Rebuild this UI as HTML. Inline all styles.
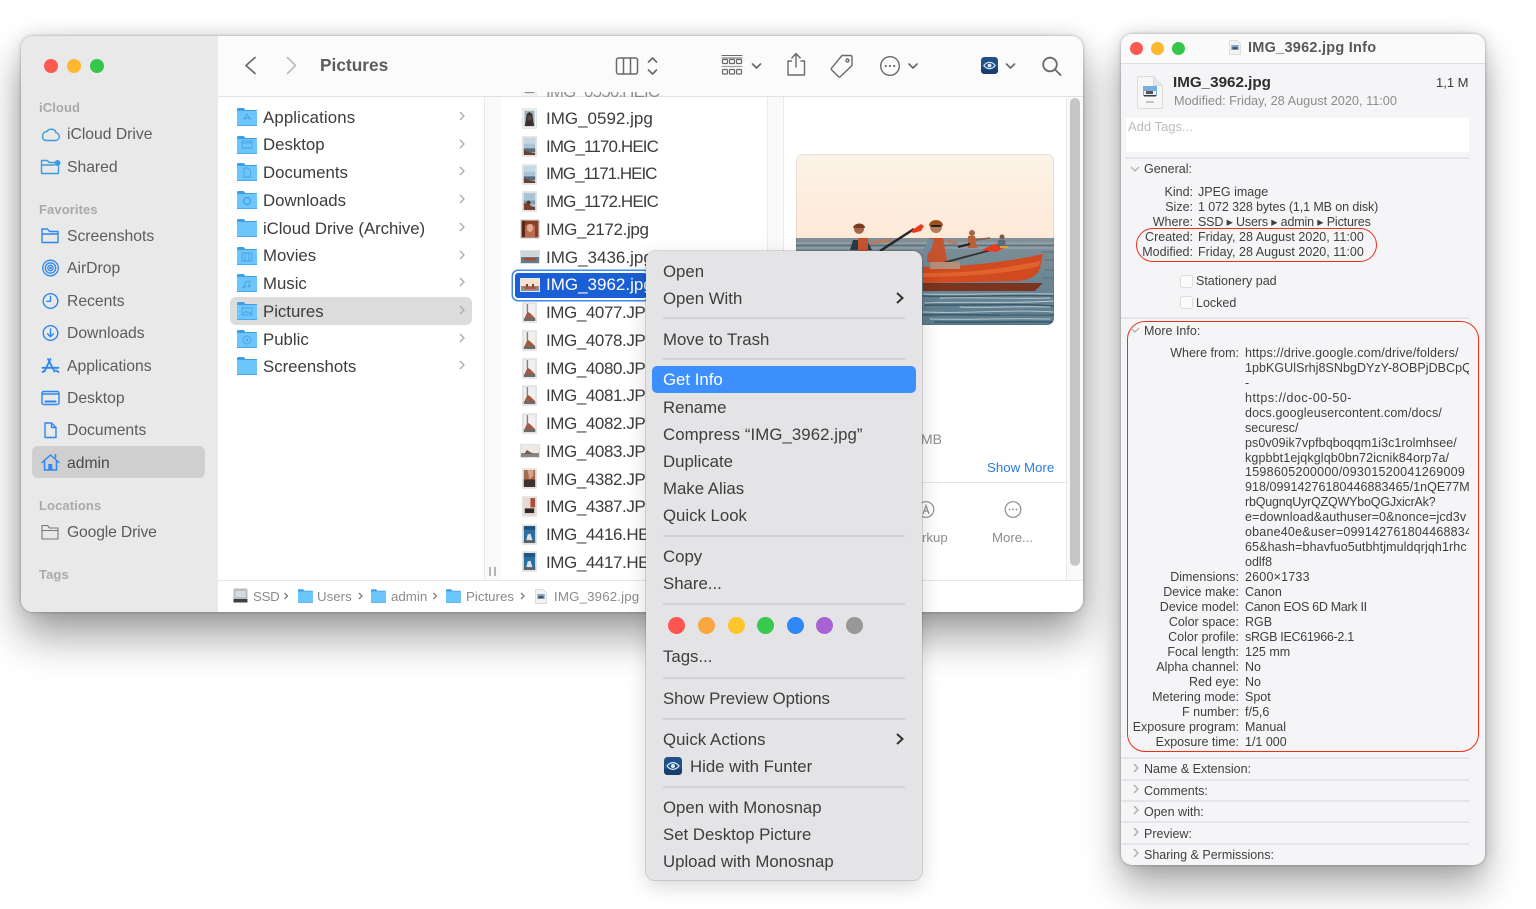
<!DOCTYPE html>
<html lang="en"><head><meta charset="utf-8"><title>Finder and Get Info</title>
<style>
html,body{margin:0;padding:0;background:#fff;width:1536px;height:909px;overflow:hidden;font-family:"Liberation Sans",sans-serif}
#stage{position:relative;width:1536px;height:909px;overflow:hidden;filter:blur(.3px)}
.a{position:absolute}
.t{position:absolute;white-space:nowrap;line-height:20px;height:20px}
svg.a{overflow:visible}
.th{filter:blur(.35px)}
#finder{position:absolute;left:21px;top:36px;width:1062px;height:576px;border-radius:12px;background:#fff;box-shadow:0 24px 42px rgba(0,0,0,.38),0 0 3px rgba(0,0,0,.3),0 0 22px rgba(0,0,0,.12)}
#side{left:21px;top:36px;width:197px;height:576px;background:#e9e9e9;border-radius:12px 0 0 12px}
#toolbar{left:218px;top:36px;width:865px;height:60px;background:#fbfbfb;border-radius:0 12px 0 0;border-bottom:1px solid #e2e2e2}
.sh{font-size:13px;font-weight:bold;color:#a9a9a9;letter-spacing:.1px}
.si{font-size:15.7px;color:#5c5c5c}
.c1{font-size:16.8px;color:#3c3c3c}
.f{font-size:17px;color:#3c3c3c}
.h{letter-spacing:-.88px}
.j{letter-spacing:-.42px}
.pb{font-size:13.3px;color:#8b8b8b}
#menu{position:absolute;left:646px;top:251px;width:276px;height:629px;background:#e4e4e6;border-radius:9px;box-shadow:0 0 0 1px rgba(0,0,0,.13),0 6px 20px rgba(0,0,0,.16)}
.m{font-size:16.8px;color:#3d3d3d;left:663px}
.ms{position:absolute;left:663px;width:242px;height:2px;background:#d2d2d4}
.dot{position:absolute;width:17px;height:17px;border-radius:50%;top:616.5px}
#info{position:absolute;left:1121px;top:34px;width:364px;height:831px;border-radius:11px;background:#f5f5f7;box-shadow:0 22px 38px rgba(0,0,0,.32),0 0 3px rgba(0,0,0,.3),0 0 20px rgba(0,0,0,.14)}
.i{font-size:12.5px;color:#3f3f3f}
.l{font-size:12.5px;color:#3f3f3f;text-align:right;left:1100px}
.l1{width:93px}
.l2{width:139px}
.v1{font-size:12.5px;color:#3f3f3f;left:1198px}
.v2{font-size:12.5px;color:#3f3f3f;left:1245px;max-width:224px;overflow:hidden}
.is{position:absolute;left:1121px;width:348px;height:2px;background:#e5e5e7}
.cb{position:absolute;left:1180px;width:11px;height:11px;background:#fbfbfb;border:1px solid #dedede;border-radius:3px}
</style></head><body><div id="stage">
<svg width="0" height="0" style="position:absolute">
<defs>
<symbol id="folder" viewBox="0 0 20 18"><path d="M0 3V1.2C0 .5.5 0 1.2 0h5c.6 0 1 .3 1.4 1L8.500 2H20v1z" fill="#3f9fe6"/><path d="M0 3h18.800c.7 0 1.200.5 1.200 1.200v12.600c0 .7-.5 1.200-1.200 1.200H1.200C.5 18 0 17.500 0 16.800z" fill="#6cc5fb"/><path d="M0 17h20v1H0z" fill="#49a9ea"/></symbol>
<symbol id="chev" viewBox="0 0 8 12"><path d="M2 2l4 4-4 4" fill="none" stroke="#aaa" stroke-width="1.300"/></symbol>
<symbol id="funter" viewBox="0 0 18 18"><rect width="18" height="18" rx="3.500" fill="#1f5188"/><path d="M0 12h18v2.500a3.500 3.500 0 0 1-3.500 3.500h-11A3.500 3.500 0 0 1 0 14.500z" fill="#173e6c"/><path d="M3 9c3.500-4.500 8.500-4.500 12 0-3.500 4.500-8.500 4.500-12 0z" fill="none" stroke="#dcecf8" stroke-width="1.200"/><circle cx="9" cy="9" r="2" fill="#dcecf8"/></symbol>
<symbol id="th-dark" viewBox="0 0 16 22"><rect width="16" height="22" fill="#e2e2e2"/><rect x="1.500" y="1.500" width="13" height="19" fill="#fff"/><rect x="2.500" y="2.500" width="11" height="17" fill="#9fb3bf"/><path d="M5 6l3-2 3 2 1 8 1 5H3l1-5z" fill="#3a2f2e"/><rect x="6" y="8" width="4" height="5" fill="#5a4a48"/></symbol>
<symbol id="th-sky" viewBox="0 0 16 22"><rect width="16" height="22" fill="#e2e2e2"/><rect x="2" y="2" width="12" height="18" fill="#a8c4d6"/><rect x="2" y="2" width="12" height="6" fill="#c4d8e4"/><rect x="2" y="13" width="12" height="4" fill="#556b78"/><path d="M2 20v-5l6 2 6 1v2z" fill="#6b4036"/></symbol>
<symbol id="th-sky2" viewBox="0 0 16 22"><rect width="16" height="22" fill="#e2e2e2"/><rect x="2" y="2" width="12" height="18" fill="#a8c4d6"/><rect x="2" y="10" width="12" height="4" fill="#7f9aa8"/><path d="M2 20v-7l5 0 3 3 4 1v3z" fill="#7a3e30"/><circle cx="7" cy="12" r="2" fill="#5a2e26"/></symbol>
<symbol id="th-face" viewBox="0 0 20 20"><rect width="20" height="20" fill="#e2e2e2"/><rect x="1.500" y="1.500" width="17" height="17" fill="#8a3e26"/><path d="M5 18V8c0-4 10-4 10 0v10z" fill="#b96a50"/><ellipse cx="10" cy="9" rx="3" ry="4" fill="#e2ad95"/><rect x="1.500" y="1.500" width="3.500" height="17" fill="#5e2718"/></symbol>
<symbol id="th-land" viewBox="0 0 20 14"><rect width="20" height="14" fill="#e0e0e0"/><rect x="1" y="1" width="18" height="12" fill="#cdd6da"/><rect x="1" y="7" width="18" height="6" fill="#5a7f8f"/><path d="M3 8h14l-2 2.500H5z" fill="#b2452c"/></symbol>
<symbol id="th-sel" viewBox="0 0 20 14"><rect width="20" height="14" fill="#e8eaf0"/><rect x="1" y="1" width="18" height="12" fill="#f6e2cf"/><rect x="1" y="8" width="18" height="5" fill="#8a9096"/><path d="M3 9h14l-2 2H5z" fill="#c94f2c"/><rect x="6" y="6" width="2" height="3" fill="#7a4032"/><rect x="12" y="6" width="2" height="3" fill="#7a4032"/></symbol>
<symbol id="th-tall" viewBox="0 0 16 22"><rect width="16" height="22" fill="#e2e2e2"/><rect x="2" y="2" width="12" height="18" fill="#f2f0ee"/><rect x="5" y="2" width="1.500" height="10" fill="#87827e"/><path d="M3 20v-4l3-6 3 2 5 5v3z" fill="#a15b43"/><rect x="2" y="17" width="12" height="3" fill="#6d6a68"/></symbol>
<symbol id="th-land2" viewBox="0 0 20 14"><rect width="20" height="14" fill="#e0e0e0"/><rect x="1" y="1" width="18" height="12" fill="#eee9e5"/><rect x="1" y="9" width="18" height="4" fill="#8a8684"/><path d="M4 10l3-4 3 2 4 2z" fill="#7a5a4c"/></symbol>
<symbol id="th-or" viewBox="0 0 16 22"><rect width="16" height="22" fill="#e2e2e2"/><rect x="2" y="2" width="12" height="18" fill="#a86a50"/><rect x="2" y="12" width="12" height="8" fill="#41312c"/><path d="M6 2h6v6l-4 4z" fill="#d8a48c"/></symbol>
<symbol id="th-or2" viewBox="0 0 16 22"><rect width="16" height="22" fill="#e2e2e2"/><rect x="2" y="2" width="12" height="18" fill="#e8d8d0"/><rect x="9" y="2" width="5" height="10" fill="#a5533a"/><rect x="3" y="13" width="10" height="5" fill="#2e2a2a"/></symbol>
<symbol id="th-blue" viewBox="0 0 16 22"><rect width="16" height="22" fill="#e2e2e2"/><rect x="2" y="2" width="12" height="18" fill="#2b6f9f"/><rect x="2" y="2" width="12" height="4" fill="#1f5580"/><path d="M4 20l2-9 3-1 3 10z" fill="#dfe3e6"/><rect x="2" y="17" width="12" height="3" fill="#55606a"/></symbol>
<symbol id="jpgfile" viewBox="0 0 14 18"><path d="M.5.500h9l4 4v13H.5z" fill="#f2f2f2" stroke="#d8d8d8"/><rect x="2.500" y="6" width="9" height="6" fill="#7fa9cf"/><rect x="4" y="8.500" width="6" height="2.500" fill="#4a4a4a"/></symbol>
</defs></svg>

<div id="finder"></div>
<div class="a" id="side"></div>
<div class="a" id="toolbar"></div>

<!-- traffic lights -->
<div class="a" style="left:43.500px;top:58.500px;width:14px;height:14px;border-radius:50%;background:#fb5a52"></div>
<div class="a" style="left:66.500px;top:58.500px;width:14px;height:14px;border-radius:50%;background:#fdb82e"></div>
<div class="a" style="left:89.500px;top:58.500px;width:14px;height:14px;border-radius:50%;background:#34c749"></div>

<!-- sidebar -->
<div class="a" style="left:32px;top:446px;width:173px;height:32px;border-radius:6px;background:#cfcfcf"></div>
<div class="t sh" style="left:39px;top:98px">iCloud</div>
<div class="t si" style="left:67px;top:125px">iCloud Drive</div>
<div class="t si" style="left:67px;top:158px">Shared</div>
<div class="t sh" style="left:39px;top:200px">Favorites</div>
<div class="t si" style="left:67px;top:227px">Screenshots</div>
<div class="t si" style="left:67px;top:259px">AirDrop</div>
<div class="t si" style="left:67px;top:292px">Recents</div>
<div class="t si" style="left:67px;top:324px">Downloads</div>
<div class="t si" style="left:67px;top:357px">Applications</div>
<div class="t si" style="left:67px;top:389px">Desktop</div>
<div class="t si" style="left:67px;top:421px">Documents</div>
<div class="t si" style="left:67px;top:454px;color:#4a4a4a">admin</div>
<div class="t sh" style="left:39px;top:496px">Locations</div>
<div class="t si" style="left:67px;top:523px;letter-spacing:-.15px">Google Drive</div>
<div class="t sh" style="left:39px;top:565px">Tags</div>

<svg class="a" style="left:0;top:0" width="218" height="612" fill="none" stroke-linecap="round" stroke-linejoin="round">
<g stroke="#3a9be0" stroke-width="1.400"><path d="M46 140.500h9c5.500 0 5.500-7 1-7.800-.8-4-7-4.800-9-1.200-5-.5-6.500 9-1 9z"/></g>
<g stroke="#3a9be0" stroke-width="1.400"><path d="M41.500 173.500v-13h6l1.500 2h5M41.500 165h13M41.500 173.500h17v-7"/><circle cx="57.500" cy="163" r="3" fill="#3a9be0" stroke="none"/></g>
<g stroke="#2f86ee" stroke-width="1.400"><path d="M42 242.500v-13.500h5.500l2 2.500h8.500v11zM42 234h16"/></g>
<g stroke="#2f86ee" stroke-width="1.300"><circle cx="50.500" cy="268" r="7.800"/><circle cx="50.500" cy="268" r="5.200"/><circle cx="50.500" cy="268" r="2.700"/><circle cx="50.500" cy="268" r=".7" fill="#2f86ee"/></g>
<g stroke="#2f86ee" stroke-width="1.400"><circle cx="50.500" cy="301" r="7.300"/><path d="M50.500 296.500v4.800h-3.700"/></g>
<g stroke="#2f86ee" stroke-width="1.400"><circle cx="50.500" cy="333" r="7.300"/><path d="M50.500 329v7.500M47.500 333.800l3 3 3-3"/></g>
<g stroke="#2f86ee" stroke-width="1.800"><path d="M50.500 359l-6 12.500M48 359l6.500 12.500M42.500 367.800h16M42.500 372l2.500-1.500M58.500 372l-2.500-1.500"/></g>
<g stroke="#2f86ee" stroke-width="1.400"><rect x="42" y="391.500" width="17" height="13" rx="1.800"/><path d="M42 394h17" stroke-dasharray="1.500 1"/><path d="M45.500 401.500h10" stroke-width="2"/></g>
<g stroke="#2f86ee" stroke-width="1.400"><path d="M45 423h6.500l4.500 4.500V437.500h-11zM51.500 423v4.500H56"/></g>
<g stroke="#2f86ee" stroke-width="1.500"><path d="M42 462.500l8.500-7.500 8.500 7.500M44.500 460.500v9.500h12v-9.500"/><path d="M55.500 454.500v3"/></g><rect x="48.300" y="464" width="4" height="6" fill="#2f86ee"/>
<g stroke="#777" stroke-width="1.100"><path d="M42 539v-13.500h5.500l2 2.500h8.500v11zM42 530.500h16"/></g>
</svg>

<!-- column strips -->
<div class="a" style="left:218px;top:97px;width:865px;height:483px;background:#fff"></div>
<div class="a" style="left:484px;top:97px;width:17px;height:483px;background:#fafafa;border-left:1px solid #eaeaea;box-sizing:border-box"></div>
<div class="a" style="left:767px;top:97px;width:17px;height:483px;background:#fafafa;border-left:1px solid #eaeaea;border-right:1px solid #eaeaea;box-sizing:border-box"></div>
<div class="a" style="left:1066px;top:97px;width:17px;height:483px;background:#fafafa;border-left:1px solid #e6e6e6;box-sizing:border-box"></div>
<div class="a" style="left:1070px;top:98px;width:10px;height:468px;border-radius:5px;background:#c6c6c6"></div>
<div class="a" style="left:489px;top:567px;width:2px;height:9px;background:#b5b5b5"></div>
<div class="a" style="left:494px;top:567px;width:2px;height:9px;background:#b5b5b5"></div>

<!-- toolbar -->
<svg class="a" style="left:0;top:0" width="1083" height="96" fill="none" stroke-linecap="round" stroke-linejoin="round">
<path d="M255 57.500l-9 8 9 8" stroke="#6a6a6a" stroke-width="1.700"/>
<path d="M287.500 57.500l8 8-8 8" stroke="#bdbdbd" stroke-width="1.700"/>
<g stroke="#6a6a6a" stroke-width="1.500"><rect x="616.500" y="58" width="21" height="16" rx="2"/><path d="M623.500 58v16M630.500 58v16"/></g>
<g stroke="#6a6a6a" stroke-width="1.700"><path d="M648.500 62l4-4 4 4M648.500 70l4 4 4-4"/></g>
<g stroke="#6a6a6a" stroke-width="1.200"><path d="M722 55.500h20M722 58h20" stroke-width="1"/><rect x="722.500" y="59.500" width="5" height="4" rx=".8"/><rect x="729.500" y="59.500" width="5" height="4" rx=".8"/><rect x="736.500" y="59.500" width="5" height="4" rx=".8"/><rect x="722.500" y="69.500" width="5" height="4.500" rx=".8"/><rect x="729.500" y="69.500" width="5" height="4.500" rx=".8"/><rect x="736.500" y="69.500" width="5" height="4.500" rx=".8"/><path d="M722 66.500h20" stroke="#a0a0a0"/></g>
<g stroke="#6a6a6a" stroke-width="1.400"><path d="M791.500 61h-3.500v14h16.500v-14h-3.500M796 67V54M791.800 58l4.200-4.500 4.200 4.500"/></g>
<g stroke="#6a6a6a" stroke-width="1.400"><path d="M842 55.500h8.500c1 0 1.500.5 1.500 1.500v8.500L840.500 76.500c-.7.700-1.500.7-2.200 0l-6.500-6.500c-.7-.7-.7-1.500 0-2.200z"/><circle cx="847.500" cy="60.500" r="1.500"/></g>
<g stroke="#6a6a6a" stroke-width="1.400"><circle cx="890" cy="66" r="9.300"/></g>
<g fill="#6a6a6a"><circle cx="885.800" cy="66" r="1.100"/><circle cx="890" cy="66" r="1.100"/><circle cx="894.200" cy="66" r="1.100"/></g>
<g stroke="#6a6a6a" stroke-width="1.700"><path d="M752.500 64l4 4 4-4M909 64l4 4 4-4M1006.500 64l4 4 4-4"/></g>
<g stroke="#6a6a6a" stroke-width="1.800"><circle cx="1050" cy="64.500" r="6.800"/><path d="M1055 69.500l5.500 5.500"/></g>
</svg>
<svg class="a" style="left:981px;top:57px" width="17" height="17"><use href="#funter"/></svg>
<div class="t" style="left:320px;top:55px;font-size:17.300px;font-weight:bold;color:#5c5c5c;line-height:20px">Pictures</div>

<!-- column 1 -->
<div class="a" style="left:230px;top:297px;width:242px;height:28px;border-radius:6px;background:#dcdcdc"></div>
<div class="t c1" style="left:263px;top:108px;letter-spacing:.15px">Applications</div>
<div class="t c1" style="left:263px;top:135px">Desktop</div>
<div class="t c1" style="left:263px;top:163px">Documents</div>
<div class="t c1" style="left:263px;top:191px">Downloads</div>
<div class="t c1" style="left:263px;top:219px;letter-spacing:-.05px">iCloud Drive (Archive)</div>
<div class="t c1" style="left:263px;top:246px">Movies</div>
<div class="t c1" style="left:263px;top:274px">Music</div>
<div class="t c1" style="left:263px;top:302px">Pictures</div>
<div class="t c1" style="left:263px;top:330px">Public</div>
<div class="t c1" style="left:263px;top:357px">Screenshots</div>
<svg class="a" style="left:237px;top:108px" width="20" height="18"><use href="#folder"/></svg>
<svg class="a" style="left:237px;top:136px" width="20" height="18"><use href="#folder"/></svg>
<svg class="a" style="left:237px;top:163px" width="20" height="18"><use href="#folder"/></svg>
<svg class="a" style="left:237px;top:191px" width="20" height="18"><use href="#folder"/></svg>
<svg class="a" style="left:237px;top:219px" width="20" height="18"><use href="#folder"/></svg>
<svg class="a" style="left:237px;top:247px" width="20" height="18"><use href="#folder"/></svg>
<svg class="a" style="left:237px;top:274px" width="20" height="18"><use href="#folder"/></svg>
<svg class="a" style="left:237px;top:302px" width="20" height="18"><use href="#folder"/></svg>
<svg class="a" style="left:237px;top:330px" width="20" height="18"><use href="#folder"/></svg>
<svg class="a" style="left:237px;top:357px" width="20" height="18"><use href="#folder"/></svg>
<!-- faint folder glyphs -->
<svg class="a" style="left:0;top:0" width="260" height="380" fill="none" stroke="#3f9ada" stroke-width=".9" opacity=".75">
<path d="M247 114l-3 6M247 114l3 6M243 118h8"/>
<path d="M242 141h10v7h-10zM242 143h10"/>
<path d="M244 168h4l2.500 2.500v6.500h-6.500z"/>
<circle cx="247" cy="201" r="3.500" stroke-width="1.500"/>
<path d="M242 253h10v8h-10zM245 253v8M249 253v8"/>
<path d="M245 287v-5l5-1v5"/><circle cx="244" cy="287" r="1"/><circle cx="249" cy="286" r="1"/>
<path d="M242 308h10v7h-10zM243 314l3-3 2 2 1.500-1 2 2"/>
<circle cx="247" cy="340" r="4"/><path d="M247 338v3M245.500 339.500l1.500 1.500 1.500-1.500"/>
</svg>
<svg class="a" style="left:458px;top:110px" width="8" height="12"><use href="#chev"/></svg>
<svg class="a" style="left:458px;top:138px" width="8" height="12"><use href="#chev"/></svg>
<svg class="a" style="left:458px;top:165px" width="8" height="12"><use href="#chev"/></svg>
<svg class="a" style="left:458px;top:193px" width="8" height="12"><use href="#chev"/></svg>
<svg class="a" style="left:458px;top:221px" width="8" height="12"><use href="#chev"/></svg>
<svg class="a" style="left:458px;top:249px" width="8" height="12"><use href="#chev"/></svg>
<svg class="a" style="left:458px;top:276px" width="8" height="12"><use href="#chev"/></svg>
<svg class="a" style="left:458px;top:304px" width="8" height="12"><use href="#chev"/></svg>
<svg class="a" style="left:458px;top:332px" width="8" height="12"><use href="#chev"/></svg>
<svg class="a" style="left:458px;top:359px" width="8" height="12"><use href="#chev"/></svg>

<!-- file column: row showing faintly through the toolbar -->
<div class="a" style="left:501px;top:92px;width:266px;height:5px;overflow:hidden;opacity:.55">
<div class="t f h" style="left:45px;top:-10px">IMG_0556.HEIC</div>
<svg class="a th" style="left:21px;top:-17px" width="15" height="21"><use href="#th-dark"/></svg>
</div>
<div class="a" style="left:513px;top:271px;width:136px;height:29px;border-radius:5px;background:#1a5fd6;box-shadow:inset 0 0 0 2px #fff,0 0 0 1.500px #3d88f0"></div>
<div class="t f" style="left:546px;top:109px">IMG_0592.jpg</div>
<div class="t f h" style="left:546px;top:137px">IMG_1170.HEIC</div>
<div class="t f h" style="left:546px;top:164px;letter-spacing:-1px">IMG_1171.HEIC</div>
<div class="t f h" style="left:546px;top:192px">IMG_1172.HEIC</div>
<div class="t f" style="left:546px;top:220px;letter-spacing:-.35px">IMG_2172.jpg</div>
<div class="t f" style="left:546px;top:248px">IMG_3436.jpg</div>
<div class="t f" style="left:546px;top:275px;color:#fff">IMG_3962.jpg</div>
<div class="t f j" style="left:546px;top:303px">IMG_4077.JPG</div>
<div class="t f j" style="left:546px;top:331px">IMG_4078.JPG</div>
<div class="t f j" style="left:546px;top:359px">IMG_4080.JPG</div>
<div class="t f j" style="left:546px;top:386px">IMG_4081.JPG</div>
<div class="t f j" style="left:546px;top:414px">IMG_4082.JPG</div>
<div class="t f j" style="left:546px;top:442px">IMG_4083.JPG</div>
<div class="t f j" style="left:546px;top:470px">IMG_4382.JPG</div>
<div class="t f j" style="left:546px;top:497px">IMG_4387.JPG</div>
<div class="t f j" style="left:546px;top:525px">IMG_4416.HEIC</div>
<div class="t f j" style="left:546px;top:553px">IMG_4417.HEIC</div>
<svg class="a th" style="left:522px;top:108px" width="15" height="21"><use href="#th-dark"/></svg>
<svg class="a th" style="left:522px;top:136px" width="15" height="21"><use href="#th-sky"/></svg>
<svg class="a th" style="left:522px;top:164px" width="15" height="21"><use href="#th-sky"/></svg>
<svg class="a th" style="left:522px;top:191px" width="15" height="21"><use href="#th-sky2"/></svg>
<svg class="a th" style="left:520px;top:219px" width="20" height="20"><use href="#th-face"/></svg>
<svg class="a th" style="left:520px;top:250px" width="20" height="14"><use href="#th-land"/></svg>
<svg class="a th" style="left:520px;top:278px" width="20" height="14"><use href="#th-sel"/></svg>
<svg class="a th" style="left:522px;top:302px" width="15" height="21"><use href="#th-tall"/></svg>
<svg class="a th" style="left:522px;top:330px" width="15" height="21"><use href="#th-tall"/></svg>
<svg class="a th" style="left:522px;top:358px" width="15" height="21"><use href="#th-tall"/></svg>
<svg class="a th" style="left:522px;top:385px" width="15" height="21"><use href="#th-tall"/></svg>
<svg class="a th" style="left:522px;top:413px" width="15" height="21"><use href="#th-tall"/></svg>
<svg class="a th" style="left:520px;top:444px" width="20" height="14"><use href="#th-land2"/></svg>
<svg class="a th" style="left:522px;top:468px" width="15" height="21"><use href="#th-or"/></svg>
<svg class="a th" style="left:522px;top:496px" width="15" height="21"><use href="#th-or2"/></svg>
<svg class="a th" style="left:522px;top:524px" width="15" height="21"><use href="#th-blue"/></svg>
<svg class="a th" style="left:522px;top:551px" width="15" height="21"><use href="#th-blue"/></svg>

<!-- preview image -->
<svg class="a th" style="left:796px;top:154px;border-radius:7px;overflow:hidden" width="258" height="171" viewBox="796 154 258 171">
<defs><linearGradient id="sky" x1="0" y1="0" x2="0" y2="1"><stop offset="0" stop-color="#fcf3e6"/><stop offset="1" stop-color="#fde9d8"/></linearGradient>
<linearGradient id="sea" x1="0" y1="0" x2="0" y2="1"><stop offset="0" stop-color="#828f96"/><stop offset=".45" stop-color="#6b8794"/><stop offset="1" stop-color="#5d7d8d"/></linearGradient></defs>
<rect x="796" y="154" width="258" height="85" fill="url(#sky)"/>
<rect x="796" y="238" width="258" height="87" fill="url(#sea)"/>
<g stroke-linecap="round" fill="none">
<path d="M923 294c40 1 90-1 130 0M940 298c30-1 70 1 110 0M925 303c40-2 80 1 128-2M923 312c50 2 90-3 130 0M930 319c40 1 80-1 120 0M960 307c30 1 60-1 90 0M1000 315c20 1 30 0 50 0" stroke="#d2dce1" stroke-width=".9" opacity=".8"/>
<path d="M923 296c40 2 90-2 130 0M925 305c40 1 90-2 128 1M923 315c50-1 90 1 130 0M935 322c40 1 80-1 118 0" stroke="#2c4d61" stroke-width="1.500" opacity=".75"/>
<path d="M796 243h258M796 248h258" stroke="#b2bdc2" stroke-width="1" opacity=".65"/>
<path d="M796 245.500h258M1042 252h12M1045 260h9M1045 270h9M1043 278h11" stroke="#4a6472" stroke-width="1.100" opacity=".7"/>
</g>
<path d="M923 283h120l-8 8h-112z" fill="#7a3420"/>
<path d="M923 267c30 0 75-3 120-13l-3 14c-3 9-12 12-22 13l-95 2z" fill="#d24a20"/>
<path d="M923 273c35 0 70-2 117-12l-1 5c-30 8-80 11-116 11z" fill="#e0622c"/>
<!-- person 1 -->
<path d="M850 250l3-10h14l5 10z" fill="#2a3a48"/><rect x="858" y="238" width="10" height="14" fill="#c75430"/>
<circle cx="859" cy="229" r="5" fill="#a4664a"/><path d="M853 228c1-6 12-6 12 0z" fill="#7a3c20"/>
<path d="M870 243l22-3" stroke="#b97c5e" stroke-width="3"/>
<path d="M880 251l34-22" stroke="#26292c" stroke-width="2.500"/><path d="M911 231l10-7 3 2-3 5-8 2z" fill="#e73a1e"/>
<!-- person 2 -->
<path d="M927 262l2-24 14 0 4 22 -3 5z" fill="#c4532e"/><path d="M923 250l6-11 5 0-4 14z" fill="#6c8ca0"/>
<circle cx="936" cy="227" r="6" fill="#b47a56"/><path d="M929 226c0-8 14-8 14 0z" fill="#a0501e"/><rect x="931" y="225" width="10" height="2" fill="#222"/>
<path d="M945 241l12 2" stroke="#b97c5e" stroke-width="2.500"/>
<path d="M935 265l60-16" stroke="#33302e" stroke-width="1.800"/><path d="M981 250l14-6 10 3-8 5z" fill="#ea3c1c"/>
<rect x="930" y="262" width="30" height="7" fill="#b38f7a"/>
<!-- far -->
<circle cx="972" cy="233" r="3" fill="#9c6a4c"/><path d="M968 236h7l2 12h-9z" fill="#b8623c"/><path d="M976 240l14-2" stroke="#8a5a44" stroke-width="1.500"/><path d="M958 247l12-3" stroke="#222" stroke-width="2"/>
<circle cx="1002" cy="237" r="2.500" fill="#7a5a48"/><path d="M998 240h7l1 7h-9z" fill="#5c6a7a"/><path d="M1000 247h8" stroke="#e8a030" stroke-width="2"/>
</svg>
<div class="a" style="left:796px;top:154px;width:256px;height:169px;border:1px solid rgba(0,0,0,.07);border-radius:7px"></div>

<div class="t" style="left:921px;top:429px;font-size:14px;color:#8c8c8c">MB</div>
<div class="t" style="left:987px;top:458px;font-size:13.300px;color:#2a7be4">Show More</div>
<div class="a" style="left:784px;top:482px;width:282px;height:1px;background:#e4e4e4"></div>
<svg class="a" style="left:918px;top:500px" width="120" height="20" fill="none"><circle cx="8" cy="9.500" r="7.800" stroke="#8c8c8c" stroke-width="1.200"/><path d="M5 14l3-8.500 3 8.500M6 11h4" stroke="#8c8c8c" stroke-width="1.200"/><circle cx="95" cy="9.500" r="7.800" stroke="#8c8c8c" stroke-width="1.200"/><g fill="#8c8c8c"><circle cx="91.500" cy="9.500" r=".9"/><circle cx="95" cy="9.500" r=".9"/><circle cx="98.500" cy="9.500" r=".9"/></g></svg>
<div class="t" style="left:922px;top:528px;font-size:13.200px;color:#8c8c8c">rkup</div>
<div class="t" style="left:992px;top:528px;font-size:13.200px;color:#8c8c8c">More...</div>

<!-- path bar -->
<div class="a" style="left:218px;top:580px;width:865px;height:32px;background:#fff;border-top:1px solid #e6e6e6;box-sizing:border-box;border-radius:0 0 12px 0"></div>
<svg class="a" style="left:233px;top:588px" width="15" height="15"><rect x=".5" y=".5" width="14" height="14" rx="1.500" fill="#b8bec2"/><rect x=".5" y="11" width="14" height="3.500" fill="#3f4244"/><rect x="2.500" y="3" width="10" height="6" fill="#d7dcdf"/></svg>
<div class="t pb" style="left:253px;top:587px;letter-spacing:-.3px">SSD</div>
<svg class="a" style="left:298px;top:589px" width="15" height="14"><use href="#folder"/></svg>
<div class="t pb" style="left:317px;top:587px">Users</div>
<svg class="a" style="left:371px;top:589px" width="15" height="14"><use href="#folder"/></svg>
<div class="t pb" style="left:391px;top:587px">admin</div>
<svg class="a" style="left:446px;top:589px" width="15" height="14"><use href="#folder"/></svg>
<div class="t pb" style="left:466px;top:587px">Pictures</div>
<svg class="a" style="left:535px;top:589px" width="12" height="15"><use href="#jpgfile"/></svg>
<div class="t pb" style="left:554px;top:587px;letter-spacing:.15px">IMG_3962.jpg</div>
<svg class="a" style="left:0;top:590px" width="540" height="14" fill="none" stroke="#7a7a7a" stroke-width="1.300"><path d="M284.500 3l3 3-3 3M359 3l3 3-3 3M433.500 3l3 3-3 3M521 3l3 3-3 3"/></svg>

<!-- context menu -->
<div id="menu"></div>
<div class="a" style="left:652px;top:366px;width:264px;height:27px;border-radius:5px;background:#3d8ffd"></div>
<div class="t m" style="top:262px">Open</div>
<div class="t m" style="top:289px">Open With</div>
<div class="ms" style="top:317px"></div>
<div class="t m" style="top:330px">Move to Trash</div>
<div class="ms" style="top:358px"></div>
<div class="t m" style="top:370px;color:#fff">Get Info</div>
<div class="t m" style="top:398px">Rename</div>
<div class="t m" style="top:425px;letter-spacing:.08px">Compress “IMG_3962.jpg”</div>
<div class="t m" style="top:452px">Duplicate</div>
<div class="t m" style="top:479px">Make Alias</div>
<div class="t m" style="top:506px">Quick Look</div>
<div class="ms" style="top:534.500px"></div>
<div class="t m" style="top:547px">Copy</div>
<div class="t m" style="top:574px">Share...</div>
<div class="ms" style="top:602.500px"></div>
<div class="dot" style="left:668px;background:#fe5550"></div>
<div class="dot" style="left:697.500px;background:#f7a841"></div>
<div class="dot" style="left:727.500px;background:#fdc62f"></div>
<div class="dot" style="left:757px;background:#38c94f"></div>
<div class="dot" style="left:786.500px;background:#2e86f7"></div>
<div class="dot" style="left:816px;background:#a862d4"></div>
<div class="dot" style="left:845.500px;background:#989898"></div>
<div class="t m" style="top:647px">Tags...</div>
<div class="ms" style="top:677px"></div>
<div class="t m" style="top:689px;letter-spacing:-.1px">Show Preview Options</div>
<div class="ms" style="top:717.500px"></div>
<div class="t m" style="top:730px;letter-spacing:.07px">Quick Actions</div>
<svg class="a" style="left:664px;top:757px" width="18" height="18"><use href="#funter"/></svg>
<div class="t m" style="left:690px;top:757px">Hide with Funter</div>
<div class="ms" style="top:785.500px"></div>
<div class="t m" style="top:798px">Open with Monosnap</div>
<div class="t m" style="top:825px">Set Desktop Picture</div>
<div class="t m" style="top:852px">Upload with Monosnap</div>
<svg class="a" style="left:0;top:0" width="922" height="760" fill="none" stroke="#333" stroke-width="2"><path d="M897 293l5.500 5-5.500 5M897 734l5.500 5-5.500 5"/></svg>

<!-- info window -->
<div id="info"></div>
<div class="a" style="left:1121px;top:34px;width:364px;height:29px;background:#fafafa;border-radius:11px 11px 0 0;border-bottom:1px solid #dfdfe0"></div>
<div class="a" style="left:1129.500px;top:41.500px;width:13px;height:13px;border-radius:50%;background:#fb5a52"></div>
<div class="a" style="left:1150.500px;top:41.500px;width:13px;height:13px;border-radius:50%;background:#fdb82e"></div>
<div class="a" style="left:1172px;top:41.500px;width:13px;height:13px;border-radius:50%;background:#34c749"></div>
<svg class="a" style="left:1229px;top:40px" width="12" height="15"><use href="#jpgfile"/></svg>
<div class="t" style="left:1248px;top:38px;font-size:14.500px;letter-spacing:.25px;font-weight:bold;color:#585858">IMG_3962.jpg Info</div>
<svg class="a" style="left:1137px;top:76px" width="26" height="33" viewBox="0 0 26 33"><path d="M.5.500h16l9 9v23H.5z" fill="#f6f6f6" stroke="#dcdcdc"/><path d="M16.500.500v9h9" fill="#e6e6e6" stroke="#dcdcdc"/><rect x="6" y="10" width="14" height="10" fill="#79aedb"/><rect x="7" y="15" width="12" height="5" fill="#e8edf0"/><rect x="9" y="15" width="7" height="3" fill="#555"/><rect x="7" y="19" width="12" height="1.500" fill="#3d3d3d"/><rect x="9" y="25" width="8" height="2" fill="#c4c4c4"/></svg>
<div class="t" style="left:1173px;top:73px;font-size:15.200px;font-weight:bold;color:#2d2d2d">IMG_3962.jpg</div>
<div class="t" style="left:1436px;top:73px;font-size:13px;color:#3a3a3a">1,1 M</div>
<div class="t" style="left:1174px;top:91px;font-size:12.720px;color:#8c8c8c">Modified: Friday, 28 August 2020, 11:00</div>
<div class="a" style="left:1126px;top:118px;width:343px;height:34px;background:#fff"></div>
<div class="t" style="left:1128px;top:117px;font-size:13px;color:#bcbcbc">Add Tags...</div>
<div class="is" style="left:1126px;width:343px;top:157px"></div>
<svg class="a" style="left:1129px;top:163px" width="12" height="12" fill="none" stroke="#aaa" stroke-width="1.200"><path d="M2 4l4 4 4-4"/></svg>
<div class="t i" style="left:1144px;top:159px">General:</div>

<div class="t l l1" style="top:182px">Kind:</div><div class="t v1" style="top:182px">JPEG image</div>
<div class="t l l1" style="top:197px">Size:</div><div class="t v1" style="top:197px;letter-spacing:-.1px">1 072 328 bytes (1,1 MB on disk)</div>
<div class="t l l1" style="top:212px">Where:</div><div class="t v1" style="top:212px;letter-spacing:-.15px">SSD ▸ Users ▸ admin ▸ Pictures</div>
<div class="t l l1" style="top:227px">Created:</div><div class="t v1" style="top:227px;letter-spacing:.03px">Friday, 28 August 2020, 11:00</div>
<div class="t l l1" style="top:242px">Modified:</div><div class="t v1" style="top:242px;letter-spacing:.03px">Friday, 28 August 2020, 11:00</div>
<div class="a" style="left:1136px;top:228px;width:241px;height:34px;border:1.500px solid #ef2f1a;border-radius:17px;box-sizing:border-box"></div>
<div class="cb" style="top:275px"></div>
<div class="t i" style="left:1196px;top:271px">Stationery pad</div>
<div class="cb" style="top:296px"></div>
<div class="t i" style="left:1196px;top:293px">Locked</div>
<div class="is" style="top:317px"></div>

<div class="a" style="left:1127px;top:321px;width:352px;height:431px;border:1.500px solid #ef2f1a;border-radius:18px;box-sizing:border-box"></div>
<svg class="a" style="left:1129px;top:324px" width="12" height="12" fill="none" stroke="#aaa" stroke-width="1.200"><path d="M2 4l4 4 4-4"/></svg>
<div class="t i" style="left:1144px;top:321px">More Info:</div>

<div class="t l l2" style="top:343px">Where from:</div>
<div class="t v2" style="top:343px;letter-spacing:.15px">https://drive.google.com/drive/folders/</div>
<div class="t v2" style="top:358px;letter-spacing:.05px">1pbKGUlSrhj8SNbgDYzY-8OBPjDBCpQG</div>
<div class="t v2" style="top:373px">-</div>
<div class="t v2" style="top:388px;letter-spacing:.5px">https://doc-00-50-</div>
<div class="t v2" style="top:403px;letter-spacing:.12px">docs.googleusercontent.com/docs/</div>
<div class="t v2" style="top:418px">securesc/</div>
<div class="t v2" style="top:433px;letter-spacing:.06px">ps0v09ik7vpfbqboqqm1i3c1rolmhsee/</div>
<div class="t v2" style="top:448px;letter-spacing:.12px">kgpbbt1ejqkglqb0bn72icnik84orp7a/</div>
<div class="t v2" style="top:462px;letter-spacing:.26px">1598605200000/09301520041269009</div>
<div class="t v2" style="top:477px;letter-spacing:.05px">918/09914276180446883465/1nQE77M</div>
<div class="t v2" style="top:492px;letter-spacing:-.2px">rbQugnqUyrQZQWYboQGJxicrAk?</div>
<div class="t v2" style="top:507px;letter-spacing:.1px">e=download&amp;authuser=0&amp;nonce=jcd3v</div>
<div class="t v2" style="top:522px;letter-spacing:.2px">obane40e&amp;user=099142761804468834</div>
<div class="t v2" style="top:537px;letter-spacing:.11px">65&amp;hash=bhavfuo5utbhtjmuldqrjqh1rhc</div>
<div class="t v2" style="top:552px">odlf8</div>
<div class="t l l2" style="top:567px">Dimensions:</div><div class="t v2" style="top:567px;letter-spacing:.2px">2600×1733</div>
<div class="t l l2" style="top:582px">Device make:</div><div class="t v2" style="top:582px">Canon</div>
<div class="t l l2" style="top:597px">Device model:</div><div class="t v2" style="top:597px;letter-spacing:-.3px">Canon EOS 6D Mark II</div>
<div class="t l l2" style="top:612px">Color space:</div><div class="t v2" style="top:612px">RGB</div>
<div class="t l l2" style="top:627px">Color profile:</div><div class="t v2" style="top:627px;letter-spacing:-.3px">sRGB IEC61966-2.1</div>
<div class="t l l2" style="top:642px">Focal length:</div><div class="t v2" style="top:642px">125 mm</div>
<div class="t l l2" style="top:657px">Alpha channel:</div><div class="t v2" style="top:657px">No</div>
<div class="t l l2" style="top:672px">Red eye:</div><div class="t v2" style="top:672px">No</div>
<div class="t l l2" style="top:687px">Metering mode:</div><div class="t v2" style="top:687px">Spot</div>
<div class="t l l2" style="top:702px">F number:</div><div class="t v2" style="top:702px">f/5,6</div>
<div class="t l l2" style="top:717px">Exposure program:</div><div class="t v2" style="top:717px">Manual</div>
<div class="t l l2" style="top:732px">Exposure time:</div><div class="t v2" style="top:732px">1/1 000</div>

<div class="is" style="top:757px"></div>
<div class="is" style="top:778.500px"></div>
<div class="is" style="top:800px"></div>
<div class="is" style="top:821px"></div>
<div class="is" style="top:842.500px"></div>
<div class="t i" style="left:1144px;top:759px">Name &amp; Extension:</div>
<div class="t i" style="left:1144px;top:781px">Comments:</div>
<div class="t i" style="left:1144px;top:802px">Open with:</div>
<div class="t i" style="left:1144px;top:824px">Preview:</div>
<div class="t i" style="left:1144px;top:845px">Sharing &amp; Permissions:</div>
<svg class="a" style="left:1132px;top:762px" width="8" height="12"><use href="#chev"/></svg>
<svg class="a" style="left:1132px;top:783px" width="8" height="12"><use href="#chev"/></svg>
<svg class="a" style="left:1132px;top:804px" width="8" height="12"><use href="#chev"/></svg>
<svg class="a" style="left:1132px;top:826px" width="8" height="12"><use href="#chev"/></svg>
<svg class="a" style="left:1132px;top:847px" width="8" height="12"><use href="#chev"/></svg>
</div></body></html>
